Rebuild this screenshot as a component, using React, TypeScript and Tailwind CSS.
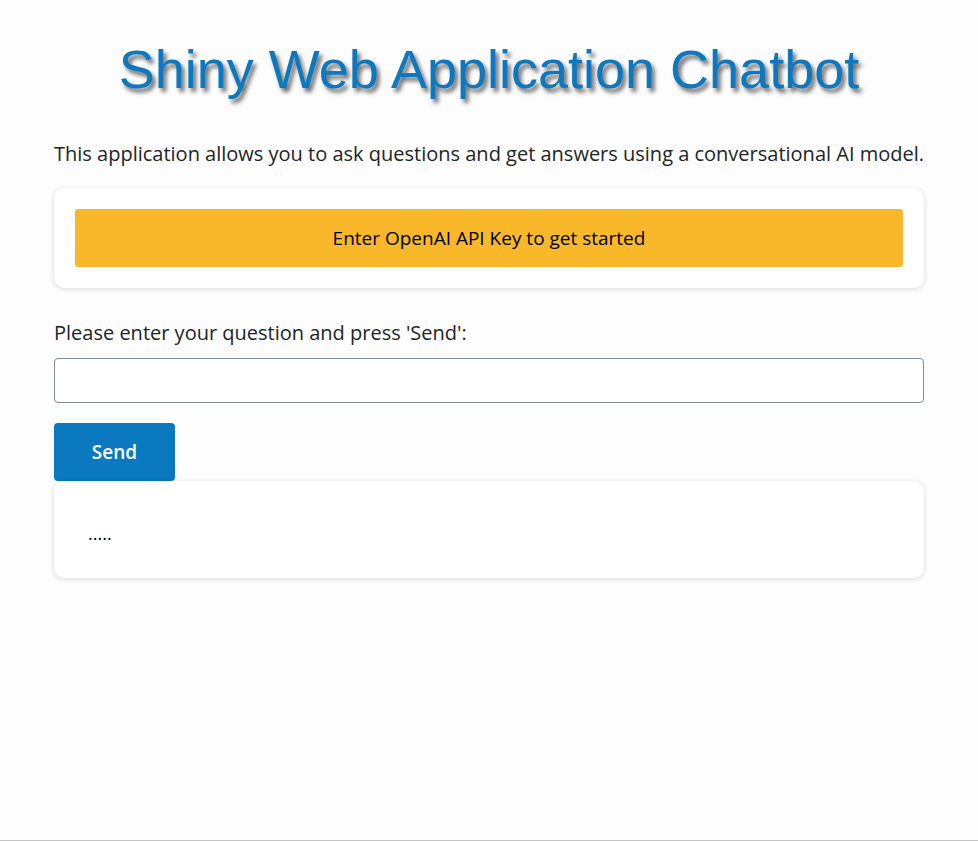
import React from "react";

export default function App() {
  return (
    <div className="min-h-[841px] w-full bg-[#fdfdfd] border-b border-[#c4c4c4] font-['Open_Sans',sans-serif] text-[#212529]">
      <div className="mx-[54px] pt-[36px]">
        <h1 className="text-center font-['Liberation_Sans',Arial,sans-serif] text-[54px] leading-[66px] text-[#0b78bf] [text-shadow:3px_4px_4px_rgba(0,0,0,0.6)]">
          Shiny Web Application Chatbot
        </h1>
        <p className="mt-[37px] text-[20px] leading-[30px] whitespace-nowrap">
          This application allows you to ask questions and get answers using a conversational AI model.
        </p>
        <div className="mt-[19px] rounded-[10px] bg-white p-[21px] shadow-[0_1px_5px_rgba(0,0,0,0.15)]">
          <button className="flex h-[58px] w-full items-center justify-center rounded-[3px] bg-[#f8b829] text-[19px] text-black">
            Enter OpenAI API Key to get started
          </button>
        </div>
        <label className="mt-[30px] block text-[20px] leading-[30px]">
          Please enter your question and press 'Send':
        </label>
        <input
          type="text"
          className="mt-[10px] block h-[45px] w-full rounded-[4px] border border-[#7f8a94] bg-white px-3 outline-none"
        />
        <button className="mt-[20px] block h-[58px] w-[121px] rounded-[4px] bg-[#0a79bf] text-[19px] font-semibold text-white">
          Send
        </button>
        <div className="h-[97px] rounded-[10px] bg-white pl-[34px] pt-[38px] shadow-[0_1px_5px_rgba(0,0,0,0.15)] text-[18px] leading-[28px] text-black">
          .....
        </div>
      </div>
    </div>
  );
}
